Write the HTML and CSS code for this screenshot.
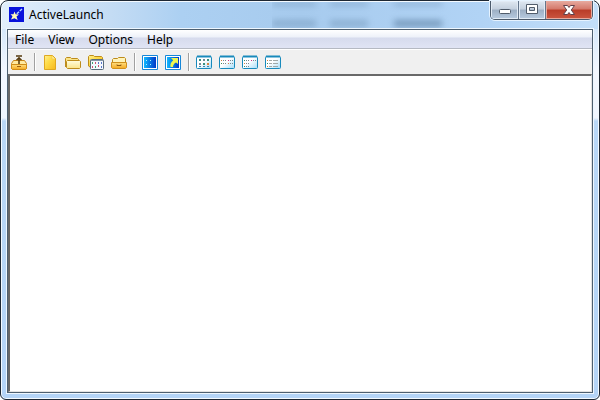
FILE: index.html
```html
<!DOCTYPE html>
<html lang="en">
<head>
<meta charset="utf-8">
<title>ActiveLaunch</title>
<link rel="stylesheet" href="styles.css">
</head>
<body>
<svg width="0" height="0" class="defs" aria-hidden="true">
  <defs>
    <linearGradient id="gold" x1="0" y1="0" x2="1" y2="1"><stop offset="0" stop-color="#fff090"/><stop offset=".4" stop-color="#ffdc48"/><stop offset="1" stop-color="#f6b81c"/></linearGradient>
    <linearGradient id="drawer" x1="0" y1="0" x2="0" y2="1"><stop offset="0" stop-color="#ffdf80"/><stop offset="1" stop-color="#f4a820"/></linearGradient>
    <linearGradient id="cream" x1="0" y1="0" x2="0" y2="1"><stop offset="0" stop-color="#fffde0"/><stop offset="1" stop-color="#fbe488"/></linearGradient>
    <linearGradient id="blue" x1="0" y1="0" x2="1" y2="0"><stop offset="0" stop-color="#10b8ff"/><stop offset="1" stop-color="#0038c8"/></linearGradient>
    <linearGradient id="pane" x1="0" y1="0" x2="1" y2="1"><stop offset=".45" stop-color="#fff"/><stop offset="1" stop-color="#a4dcf8"/></linearGradient>
  </defs>
</svg>
<div class="window">
  <header class="titlebar">
    <svg class="logo" viewBox="0 0 15 15" aria-hidden="true"><rect width="15" height="15" fill="#0712dc"/><path d="M13 2 7.500 7" stroke="#b8d8ff" stroke-width="1.500" stroke-dasharray="3 1"/><path d="M5.500 4.500 6.600 7.300 10 7.600 7.500 9.500 8.700 13 5.500 11.200 2 12.500 3.500 9.300 1.500 7.200 4.500 7.300Z" fill="#fff9b8"/></svg>
    <h1>ActiveLaunch</h1>
    <div class="backdrop" aria-hidden="true"><i></i><i></i><i></i><i></i><i></i><i></i></div>
    <div class="caption">
      <button class="min" aria-label="Minimize"><svg width="14" height="14" viewBox="0 0 14 14"><rect x="1.500" y="6.500" width="11" height="4" rx="1" fill="#fff" stroke="#515c6b"/></svg></button>
      <button class="max" aria-label="Maximize"><svg width="14" height="14" viewBox="0 0 14 14"><path fill="#fff" fill-rule="evenodd" stroke="#515c6b" d="M1.500 1.500h11v9h-11zM4.500 4.500v3h5v-3z"/></svg></button>
      <button class="close" aria-label="Close"><svg width="14" height="14" viewBox="0 0 14 14"><path d="M1.500 2.500h4L7 4.500l1.500-2h4L9.300 7l3.200 4.500h-4L7 9.500l-1.500 2h-4L4.700 7z" fill="#fff" stroke="#62404a"/></svg></button>
    </div>
  </header>
  <main class="client">
    <nav class="menubar">
      <button>File</button><button>View</button><button>Options</button><button>Help</button>
    </nav>
    <div class="toolbar" role="toolbar" aria-label="Launcher">
      <button aria-label="Up one level"><svg viewBox="0 0 16 16"><path d="M2.500 5.500h11l2 3v5l-1 1h-13l-1-1v-5z" fill="#ffe9a0" stroke="#c98518"/><path d="M.5 9.500h15v4l-1 1h-13l-1-1z" fill="url(#drawer)" stroke="#d08c18"/><path d="M6 11.500h4" stroke="#a06010"/><path d="M5 1h6M8 2v7M5.500 5 8 3l2.500 2" fill="none" stroke="#54380c" stroke-width="1.500"/></svg></button>
      <span class="sep"></span>
      <button aria-label="New item"><svg viewBox="0 0 16 16"><path d="M2.500.500h8l3 3v11h-11z" fill="url(#gold)" stroke="#dfa820"/><path d="M10 1v3h3" fill="#fff6b8" stroke="#f3cc50"/></svg></button>
      <button aria-label="New folder"><svg viewBox="0 0 16 16"><path d="M.5 12V3.500l1-1h4l1 1h6l1 1V12" fill="#fbe488" stroke="#bd8c1c"/><path d="M2.500 5.500h12l1 1v6l-1 1h-12l-1-1v-6z" fill="url(#cream)" stroke="#bd8c1c"/></svg></button>
      <button aria-label="New program group"><svg viewBox="0 0 16 16"><path d="M.5 11V1.500l1-1h4l1 1h7l1 1V12H2z" fill="url(#gold)" stroke="#bd8c1c"/><rect x="2.500" y="4.500" width="13" height="10" rx="1" fill="#f4f8ff" stroke="#596c7c"/><path d="M3 5.500h12" stroke="#8496a8"/><path d="M4 8h1M7 12h1" stroke="#40a070" stroke-width="2"/><path d="M7 8h1M10 11h1M4 12h1" stroke="#d05070" stroke-width="2"/><path d="M10 8h1M13 8h1M13 12h1" stroke="#5878c8" stroke-width="2"/></svg></button>
      <button aria-label="Open drawer"><svg viewBox="0 0 16 16"><path d="M1.500 8V4.500l1-1h4l1-1h6l1 1V8" fill="#fff3b8" stroke="#bd8c1c"/><path d="M.5 7.500h15v5l-1 1h-13l-1-1z" fill="url(#drawer)" stroke="#d0901c"/><path d="M6 9.500v1h4v-1" fill="none" stroke="#8f5a10"/></svg></button>
      <span class="sep"></span>
      <button aria-label="Desktop"><svg viewBox="0 0 16 16"><path d="M.5 0.500h15v14H.5z" fill="#fff" stroke="#1687d8"/><path d="M2 2h12v11H2z" fill="url(#blue)"/><path d="M4 5.500h1M4 9.500h1M8 5.500h1M8 9.500h1" stroke="#a8f0ff"/></svg></button>
      <button aria-label="Shortcut"><svg viewBox="0 0 16 16"><path d="M.5 0.500h15v14H.5z" fill="#fff" stroke="#1687d8"/><path d="M2 2h12v11H2z" fill="url(#blue)"/><path d="M6 3h7v6l-2-1.500C9 8.500 8 10 8 12H5.500C5 9 6 7 8.200 5.200z" fill="#f0f850"/></svg></button>
      <span class="sep"></span>
      <button aria-label="Large icons"><svg viewBox="0 0 16 16"><rect x=".5" y="1.500" width="15" height="12" rx="1" fill="url(#pane)" stroke="#188abc"/><path d="M1 1.500h14" stroke="#188abc" stroke-width="2"/><path d="M3 5h2M7 9h2M11 5h2" stroke="#359080" stroke-width="2"/><path d="M7 5h2M3 9h2" stroke="#738a98" stroke-width="2"/><path d="M11 9h2" stroke="#d88440" stroke-width="2"/><path d="M3 11.500h2M7 11.500h2M11 11.500h2" stroke="#4086b0"/></svg></button>
      <button aria-label="Small icons"><svg viewBox="0 0 16 16"><rect x=".5" y="1.500" width="15" height="12" rx="1" fill="url(#pane)" stroke="#188abc"/><path d="M1 1.500h14" stroke="#188abc" stroke-width="2"/><path d="M2 5.500h1M9 8.500h1" stroke="#d88440"/><path d="M9 5.500h1" stroke="#d03088"/><path d="M2 8.500h1" stroke="#359060"/><path d="M4 5.500h3M4 8.500h3M11 5.500h3M11 8.500h3" stroke="#788890" stroke-dasharray="1 1"/></svg></button>
      <button aria-label="List"><svg viewBox="0 0 16 16"><rect x=".5" y="1.500" width="15" height="12" rx="1" fill="url(#pane)" stroke="#188abc"/><path d="M1 1.500h14" stroke="#188abc" stroke-width="2"/><path d="M2 5.500h1M2 11.500h1" stroke="#359060"/><path d="M9 5.500h1" stroke="#d03088"/><path d="M2 8.500h1" stroke="#d88440"/><path d="M4 5.500h3M4 8.500h3M4 11.500h3M11 5.500h3" stroke="#788890" stroke-dasharray="1 1"/></svg></button>
      <button aria-label="Details"><svg viewBox="0 0 16 16"><rect x=".5" y="1.500" width="15" height="12" rx="1" fill="url(#pane)" stroke="#188abc"/><path d="M1 1.500h14" stroke="#188abc" stroke-width="2"/><path d="M2 5.500h1M2 11.500h1" stroke="#d88440"/><path d="M2 8.500h1" stroke="#359060"/><path d="M4 5.500h3M8 5.500h5M4 8.500h3M8 8.500h5M4 11.500h3M8 11.500h5" stroke="#a0a8a8"/></svg></button>
    </div>
    <section class="workspace" aria-label="Items"></section>
  </main>
</div>
</body>
</html>
```
FILE: styles.css
```css
* {
  box-sizing: border-box;
}

body {
  margin: 0;
  background: #fff;
  font: 12px/18px "Noto Sans", "Open Sans", sans-serif;
  color: #000;
}

.defs {
  position: absolute;
}

.window {
  display: flex;
  flex-direction: column;
  height: 100vh;
  padding: 0 5px 5px;
  border: 1px solid #1d2733;
  border-radius: 8px 8px 6px 6px;
  box-shadow: inset 0 0 0 1px #f4faff;
  background:
    linear-gradient(90deg, #e2effc 0, #c4dcf4 110px, #acd0f2 180px, #a7cbee 300px, #b1d3f5 480px, #c4dff9 100%) 0 0 / 100% 28px no-repeat,
    linear-gradient(180deg, #d6e8fb 28px, #f2f7ff 70px, #f0f6ff 117px, #b9d7f6 120px, #b4d4f7 100%);
}

.titlebar {
  position: relative;
  display: flex;
  align-items: center;
  height: 27px;
  flex: none;
  padding: 0 1px 0 3px;
}

.logo {
  width: 15px;
  height: 15px;
  margin-right: 5px;
}

h1 {
  flex: 1;
  margin: 0;
  font-size: 12px;
  line-height: 18px;
  font-weight: 400;
}

/* Blurred rows of the window behind, seen through the glass frame */
.backdrop {
  position: absolute;
  inset: 1px 0 0 266px;
  display: grid;
  grid-template-columns: 44px 38px 48px;
  grid-template-rows: 4px 7px;
  gap: 14px;
  overflow: hidden;
  pointer-events: none;
}

.backdrop i {
  background: #54789a;
  opacity: 0.35;
  filter: blur(3px);
}

.backdrop i:nth-child(3n) {
  margin-left: 12px;
  margin-right: -12px;
}

.backdrop i:nth-child(6) {
  opacity: 0.6;
}

.caption {
  position: relative;
  display: flex;
  align-self: flex-start;
  height: 19px;
  border: 1px solid #4c5a6b;
  border-top: 0;
  border-radius: 0 0 5px 5px;
  overflow: hidden;
  box-shadow: 0 0 0 1px #e6f3ff;
}

.caption button {
  display: flex;
  align-items: center;
  justify-content: center;
  width: 27px;
  padding: 0;
  border: 0;
  border-right: 1px solid #64758a;
  background: linear-gradient(#e0e8f1 0, #c4d0de 45%, #9dafc4 50%, #b8cbe0 100%);
  box-shadow: inset 0 0 0 1px #e2ebf5;
}

.caption .min {
  width: 28px;
}

.caption .close {
  width: 46px;
  border-right: 0;
  background: linear-gradient(#e7aaa0 0, #d4786a 45%, #b93c28 50%, #cb5640 100%);
  box-shadow: inset 0 0 0 1px #e7a89c;
}

.client {
  display: flex;
  flex: 1;
  flex-direction: column;
  border: 1px solid #4d5f70;
  box-shadow: 0 0 0 1px #eef7ff;
  margin: 1px;
  background: #f0f0f0;
}

.menubar {
  display: flex;
  height: 19px;
  background: linear-gradient(#fff 0, #edf1f9 7px, #d6dbed 8px, #e0e4f4 18px);
  border-bottom: 1px solid #b5b9c2;
}

.menubar button {
  height: 20px;
  padding: 0 7px;
  border: 0;
  background: none;
  font: inherit;
  color: inherit;
}

.toolbar {
  display: flex;
  align-items: center;
  height: 25px;
  border-top: 1px solid #fff;
}

.toolbar button {
  display: flex;
  align-items: center;
  width: 23px;
  height: 23px;
  padding: 1px 0 0 3px;
  border: 0;
  background: none;
}

.toolbar svg {
  width: 16px;
  height: 16px;
}

.sep {
  width: 2px;
  height: 18px;
  margin: 0 3px;
  border-left: 1px solid #a0a0a0;
  border-right: 1px solid #fff;
}

.workspace {
  flex: 1;
  border: 2px solid;
  border-color: #696969 #e3e3e3 #e3e3e3 #696969;
  border-right-width: 1px;
  border-bottom-width: 1px;
  background: #fff;
}
```
